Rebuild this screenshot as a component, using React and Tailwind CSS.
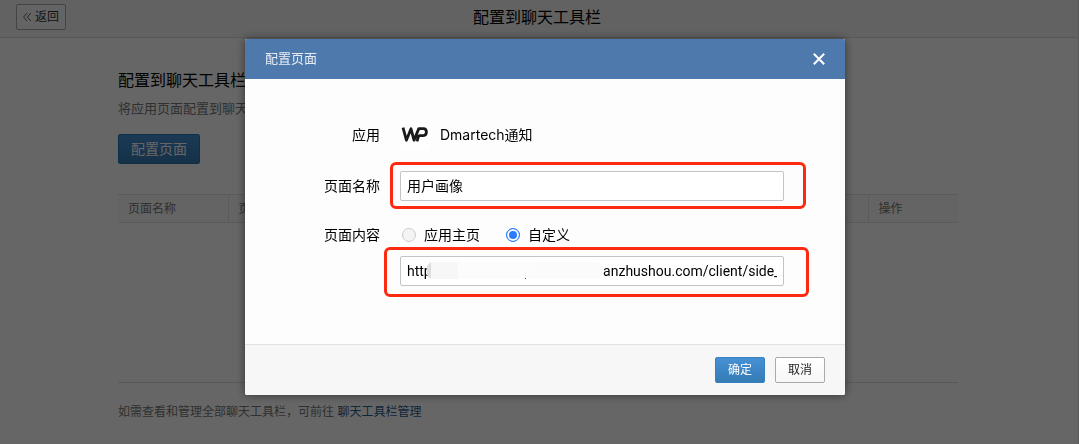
import { useState } from "react";

const hiddenGap = "\u2003".repeat(12);
const urlValue = "http" + hiddenGap + "anzhushou.com/client/side_";

function AppLogo() {
  return (
    <svg viewBox="0 0 30 30" className="size-[30px] bg-white" fill="none" stroke="#1a1a1a" strokeWidth="2.8" strokeLinejoin="round" strokeLinecap="butt" aria-hidden="true">
      <path d="M3 7.6 L6.4 20.2 L11 8.8 L14 20.2 L18.8 8.6 H23.4 C27.4 8.6 27.4 15.6 23.4 15.6 H18.8 M18.9 14.8 L17 21.4" />
    </svg>
  );
}

function Page() {
  return (
    <div className="flex min-h-screen flex-col border-r border-[#dcdcdc] bg-white">
      <header className="grid h-[38px] shrink-0 grid-cols-[1fr_auto_1fr] items-center border-b border-[#dcdcdc] bg-[#f5f5f5] pr-5 pl-4">
        <button type="button" className="mt-[-4px] flex h-[26px] w-[50px] items-center justify-center gap-1 rounded-xs border border-[#aaa] bg-[#fafafa] text-xs text-[#333]">
          <svg viewBox="0 0 8 8" className="size-2" fill="none" stroke="#555" strokeWidth="0.9" aria-hidden="true">
            <path d="M4 0 L0.6 4 L4 8 M7.8 0 L4.4 4 L7.8 8" />
          </svg>
          返回
        </button>
        <h1 className="pb-[3px] text-base leading-5 text-black">配置到聊天工具栏</h1>
      </header>
      <div className="flex grow flex-col pr-0.5">
        <main className="mx-auto flex w-full max-w-[840px] grow flex-col pt-8">
          <h2 className="text-base leading-5 text-black">配置到聊天工具栏</h2>
          <p className="mt-2 text-[13px] leading-5 text-[#787878]">将应用页面配置到聊天工具栏</p>
          <button type="button" className="mt-4 h-[30px] w-[82px] rounded-xs border border-[#2577b5] bg-linear-to-b from-[#4690d5] to-[#347cb5] text-sm text-white">
            配置页面
          </button>
          <div className="mt-[30px] min-h-[189px] border-b border-[#dedede]">
            <table className="w-full table-fixed border-collapse text-left text-xs text-[#787878]">
              <thead>
                <tr className="h-7 border-y border-[#e0e0e0] bg-[#f9f9f9]">
                  <th className="w-[110px] px-2.5 font-normal">页面名称</th>
                  <th className="border-l border-[#e4e4e4] px-2.5 font-normal">页面内容</th>
                  <th className="w-[90px] border-l border-[#e4e4e4] px-2.5 font-normal">操作</th>
                </tr>
              </thead>
            </table>
          </div>
          <p className="mt-[19px] text-xs leading-5 text-[#787878]">
            如需查看和管理全部聊天工具栏，可前往{" "}
            <a href="#toolbar" className="text-[#266192]">聊天工具栏管理</a>
          </p>
        </main>
      </div>
    </div>
  );
}

function Highlight({ className }) {
  return <span aria-hidden="true" className={"pointer-events-none absolute rounded-md border-[#fb2a10] " + className} />;
}

function Dialog() {
  const [target, setTarget] = useState("custom");
  const radio =
    "size-3.5 appearance-none rounded-full border border-[#ccc] bg-[#f4f4f4] checked:border-[#2b7bff] checked:bg-[#2b7bff] checked:shadow-[inset_0_0_0_2px_#fff]";
  const field = "h-[30px] w-full rounded-xs border border-[#c4c4c4] bg-white px-1.5 text-sm text-black outline-none font-['Roboto','Noto_Sans_CJK_SC',sans-serif]";
  return (
    <section role="dialog" aria-label="配置页面" className="w-[600px] max-w-full rounded-xs bg-[#fdfdfd] shadow-[0_0_10px_rgba(0,0,0,0.5)]">
      <div className="flex h-10 items-center justify-between rounded-t-xs bg-[#4e79ad] px-5">
        <h2 className="text-[13px] text-[#e6ecf4]">配置页面</h2>
        <button type="button" aria-label="关闭" className="flex">
          <svg viewBox="0 0 12 12" className="size-3" fill="none" stroke="white" strokeWidth="2" aria-hidden="true">
            <path d="M0.8 0.8 L11.2 11.2 M11.2 0.8 L0.8 11.2" />
          </svg>
        </button>
      </div>
      <form className="grid grid-cols-[135px_384px] gap-x-5 pt-10 pb-[58px] text-sm text-black">
        <span className="text-right leading-8">应用</span>
        <div className="flex h-8 items-center gap-2.5">
          <AppLogo />
          <span>Dmartech通知</span>
        </div>
        <label htmlFor="name" className="mt-5 text-right leading-[30px]">页面名称</label>
        <div className="relative mt-5">
          <input id="name" className={field + " pb-0.5"} defaultValue="用户画像" />
          <Highlight className="-top-[9px] -right-[22px] -bottom-2 -left-2.5 border-[3px]" />
        </div>
        <span className="mt-[19px] text-right leading-[30px]">页面内容</span>
        <div className="mt-[19px] flex h-[30px] items-center gap-[26px] pl-0.5">
          <label className="flex items-center gap-2">
            <input type="radio" name="target" className={radio} checked={target === "home"} onChange={() => setTarget("home")} />
            应用主页
          </label>
          <label className="flex items-center gap-2">
            <input type="radio" name="target" className={radio} checked={target === "custom"} onChange={() => setTarget("custom")} />
            自定义
          </label>
        </div>
        <div className="relative col-start-2 mt-1.5">
          <input aria-label="自定义页面地址" className={field} defaultValue={urlValue} />
          <span aria-hidden="true" className="absolute top-1.5 left-[27px] flex h-[17px] w-[175px] overflow-hidden rounded-md bg-[#fefefe]">
            <span className="w-1 bg-[#dedede]" />
            <span className="w-[27px] bg-[#f7f7f7]" />
            <span className="w-[80px] bg-[#fcfcfc]" />
            <span className="grow bg-[#fbfbfb]" />
          </span>
          <span aria-hidden="true" className="absolute top-[22px] left-[125px] size-px bg-[#555]" />
          <Highlight className="-top-[9px] -right-[25px] -bottom-[11px] -left-4 border-[3px]" />
        </div>
      </form>
      <div className="flex h-[51px] items-center justify-end gap-2.5 rounded-b-xs border-t border-[#e2e2e2] bg-[#f7f7f7] px-5 text-xs">
        <button type="button" className="h-[26px] w-[50px] rounded-xs border border-[#3580bd] bg-linear-to-b from-[#4690d5] to-[#347cb5] text-white">确定</button>
        <button type="button" className="h-[26px] w-[50px] rounded-xs border border-[#aaa] bg-linear-to-b from-white to-[#f7f7f7] text-[#222]">取消</button>
      </div>
    </section>
  );
}

export default function App() {
  return (
    <div className="font-['Inter','Noto_Sans_CJK_SC',sans-serif]">
      <Page />
      <div className="fixed inset-0 flex items-start justify-center bg-black/60 pt-[39px] pl-[11px]">
        <Dialog />
      </div>
    </div>
  );
}
